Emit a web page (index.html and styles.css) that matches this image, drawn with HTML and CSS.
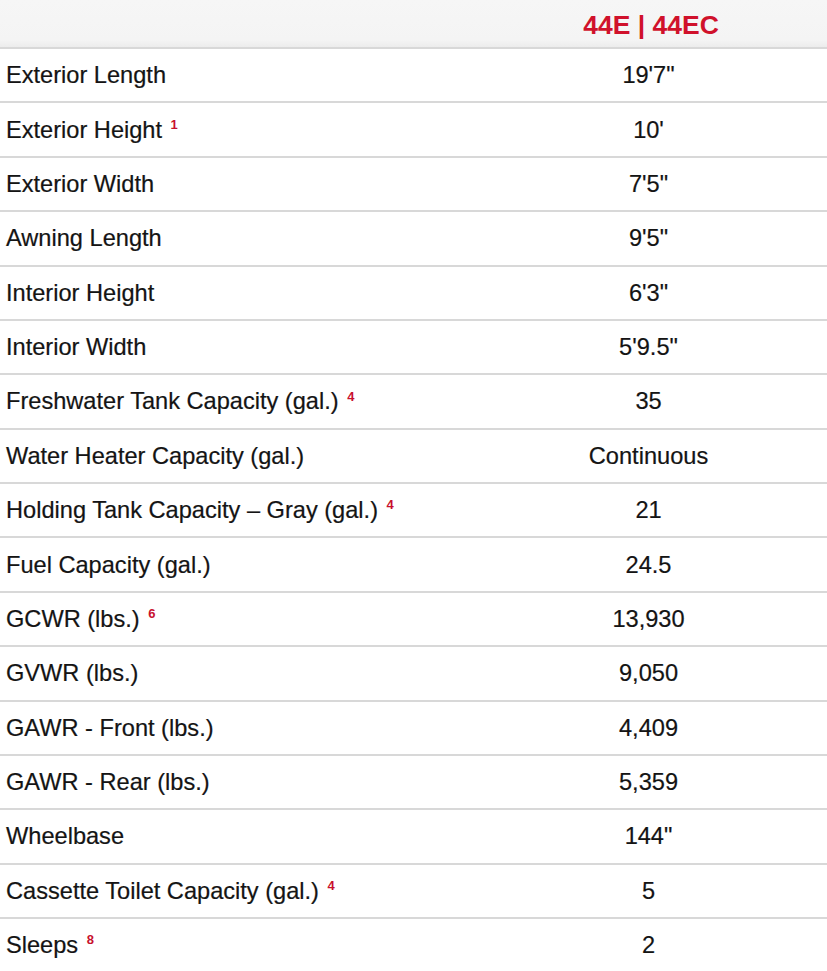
FILE: index.html
```html
<!DOCTYPE html>
<html lang="en">
<head>
<meta charset="utf-8">
<title>Specifications</title>
<link rel="stylesheet" href="styles.css">
</head>
<body>
<div class="specs">
  <div class="head">
    <div class="cell label"></div>
    <div class="cell value model">44E | 44EC</div>
  </div>
  <div class="row"><div class="cell label">Exterior Length</div><div class="cell value">19'7"</div></div>
  <div class="row"><div class="cell label">Exterior Height <sup class="note">1</sup></div><div class="cell value">10'</div></div>
  <div class="row"><div class="cell label">Exterior Width</div><div class="cell value">7'5"</div></div>
  <div class="row"><div class="cell label">Awning Length</div><div class="cell value">9'5"</div></div>
  <div class="row"><div class="cell label">Interior Height</div><div class="cell value">6'3"</div></div>
  <div class="row"><div class="cell label">Interior Width</div><div class="cell value">5'9.5"</div></div>
  <div class="row"><div class="cell label">Freshwater Tank Capacity (gal.) <sup class="note">4</sup></div><div class="cell value">35</div></div>
  <div class="row"><div class="cell label">Water Heater Capacity (gal.)</div><div class="cell value">Continuous</div></div>
  <div class="row"><div class="cell label">Holding Tank Capacity – Gray (gal.) <sup class="note">4</sup></div><div class="cell value">21</div></div>
  <div class="row"><div class="cell label">Fuel Capacity (gal.)</div><div class="cell value">24.5</div></div>
  <div class="row"><div class="cell label">GCWR (lbs.) <sup class="note">6</sup></div><div class="cell value">13,930</div></div>
  <div class="row"><div class="cell label">GVWR (lbs.)</div><div class="cell value">9,050</div></div>
  <div class="row"><div class="cell label">GAWR - Front (lbs.)</div><div class="cell value">4,409</div></div>
  <div class="row"><div class="cell label">GAWR - Rear (lbs.)</div><div class="cell value">5,359</div></div>
  <div class="row"><div class="cell label">Wheelbase</div><div class="cell value">144"</div></div>
  <div class="row"><div class="cell label">Cassette Toilet Capacity (gal.) <sup class="note">4</sup></div><div class="cell value">5</div></div>
  <div class="row"><div class="cell label">Sleeps <sup class="note">8</sup></div><div class="cell value">2</div></div>
</div>
</body>
</html>
```

FILE: styles.css
```css
html, body {
  margin: 0;
  padding: 0;
  background: #ffffff;
}

body {
  font-family: "Liberation Sans", Arial, sans-serif;
  color: #141414;
  overflow: hidden;
}

.specs {
  width: 827px;
  display: flex;
  flex-direction: column;
}

.head,
.row {
  display: grid;
  grid-template-columns: 470px 1fr;
  align-items: center;
}

.head {
  height: 47px;
  background: linear-gradient(to bottom, #f6f6f6 0%, #f4f4f4 85%, #ececec 100%);
}

.row {
  box-sizing: border-box;
  height: 54.375px;
  border-top: 2px solid #d8d8d8;
}

.cell {
  font-size: 23.6px;
  line-height: 28px;
  -webkit-text-stroke: 0.2px #141414;
}

.label {
  padding-left: 6px;
  white-space: nowrap;
}

.value {
  text-align: center;
}

.model {
  color: #d0112b;
  -webkit-text-stroke: 0;
  font-weight: bold;
  font-size: 26.5px;
  line-height: 30px;
  padding-top: 2px;
  padding-left: 5px;
}

.note {
  color: #c8102e;
  -webkit-text-stroke: 0;
  font-weight: bold;
  font-size: 13px;
  line-height: 0;
  vertical-align: super;
  margin-left: 2px;
}
```
